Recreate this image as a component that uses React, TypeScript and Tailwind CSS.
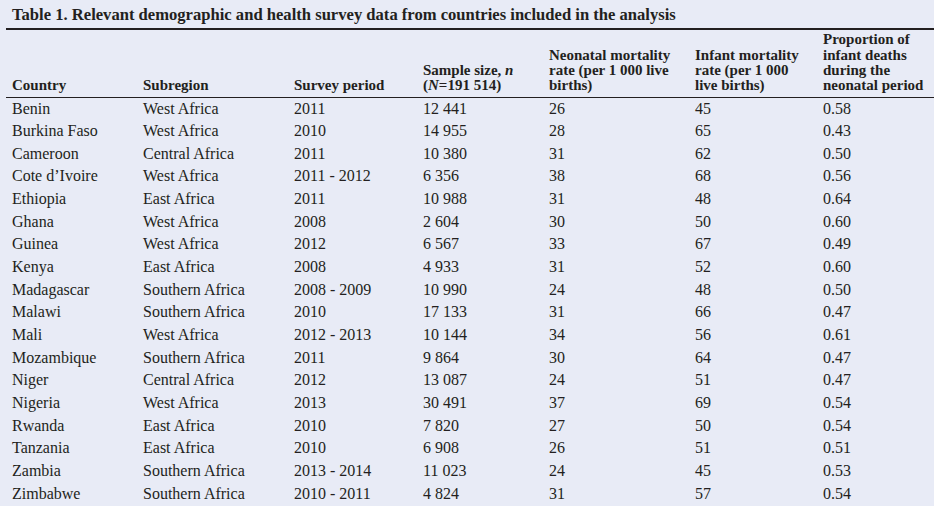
const rows: [string, string, string, string, string, string, string][] = [
  ["Benin", "West Africa", "2011", "12 441", "26", "45", "0.58"],
  ["Burkina Faso", "West Africa", "2010", "14 955", "28", "65", "0.43"],
  ["Cameroon", "Central Africa", "2011", "10 380", "31", "62", "0.50"],
  ["Cote d’Ivoire", "West Africa", "2011 - 2012", "6 356", "38", "68", "0.56"],
  ["Ethiopia", "East Africa", "2011", "10 988", "31", "48", "0.64"],
  ["Ghana", "West Africa", "2008", "2 604", "30", "50", "0.60"],
  ["Guinea", "West Africa", "2012", "6 567", "33", "67", "0.49"],
  ["Kenya", "East Africa", "2008", "4 933", "31", "52", "0.60"],
  ["Madagascar", "Southern Africa", "2008 - 2009", "10 990", "24", "48", "0.50"],
  ["Malawi", "Southern Africa", "2010", "17 133", "31", "66", "0.47"],
  ["Mali", "West Africa", "2012 - 2013", "10 144", "34", "56", "0.61"],
  ["Mozambique", "Southern Africa", "2011", "9 864", "30", "64", "0.47"],
  ["Niger", "Central Africa", "2012", "13 087", "24", "51", "0.47"],
  ["Nigeria", "West Africa", "2013", "30 491", "37", "69", "0.54"],
  ["Rwanda", "East Africa", "2010", "7 820", "27", "50", "0.54"],
  ["Tanzania", "East Africa", "2010", "6 908", "26", "51", "0.51"],
  ["Zambia", "Southern Africa", "2013 - 2014", "11 023", "24", "45", "0.53"],
  ["Zimbabwe", "Southern Africa", "2010 - 2011", "4 824", "31", "57", "0.54"],
];

const widths = ["w-[131px]", "w-[151px]", "w-[129px]", "w-[126px]", "w-[146px]", "w-[128px]", "w-[117px]"];

export default function App() {
  return (
    <div className="h-[506px] w-[934px] overflow-hidden bg-[#e8ebf6] pl-[6px] pt-[5px] font-['Liberation_Serif',serif] text-[#231f20]">
      <h1 className="border-b-2 border-[#231f20] pb-[4px] pl-[6px] text-[16.6px] font-bold leading-[19px]">
        Table 1. Relevant demographic and health survey data from countries included in the analysis
      </h1>
      <table className="w-[928px] table-fixed border-collapse">
        <colgroup>
          {widths.map((w, i) => (
            <col key={i} className={w} />
          ))}
        </colgroup>
        <thead>
          <tr className="h-[67px] border-b border-[#231f20] align-bottom text-[15px] font-bold leading-[15.3px]">
            <th className="pb-[3px] pl-[6px] text-left font-bold">Country</th>
            <th className="pb-[3px] pl-[6px] text-left font-bold">Subregion</th>
            <th className="pb-[3px] pl-[6px] text-left font-bold">Survey period</th>
            <th className="pb-[3px] pl-[6px] text-left font-bold">
              Sample size, <i>n</i>
              <br />(<i>N</i>=191 514)
            </th>
            <th className="pb-[3px] pl-[6px] text-left font-bold">
              Neonatal mortality
              <br />rate (per 1 000 live
              <br />births)
            </th>
            <th className="pb-[3px] pl-[6px] text-left font-bold">
              Infant mortality
              <br />rate (per 1 000
              <br />live births)
            </th>
            <th className="pb-[3px] pl-[6px] text-left font-bold">
              Proportion of
              <br />infant deaths
              <br />during the
              <br />neonatal period
            </th>
          </tr>
        </thead>
        <tbody className="text-[16px] leading-[22.65px]">
          {rows.map((r) => (
            <tr key={r[0]}>
              {r.map((c, i) => (
                <td key={i} className="whitespace-nowrap p-0 pl-[6px]">
                  {c}
                </td>
              ))}
            </tr>
          ))}
        </tbody>
      </table>
    </div>
  );
}
